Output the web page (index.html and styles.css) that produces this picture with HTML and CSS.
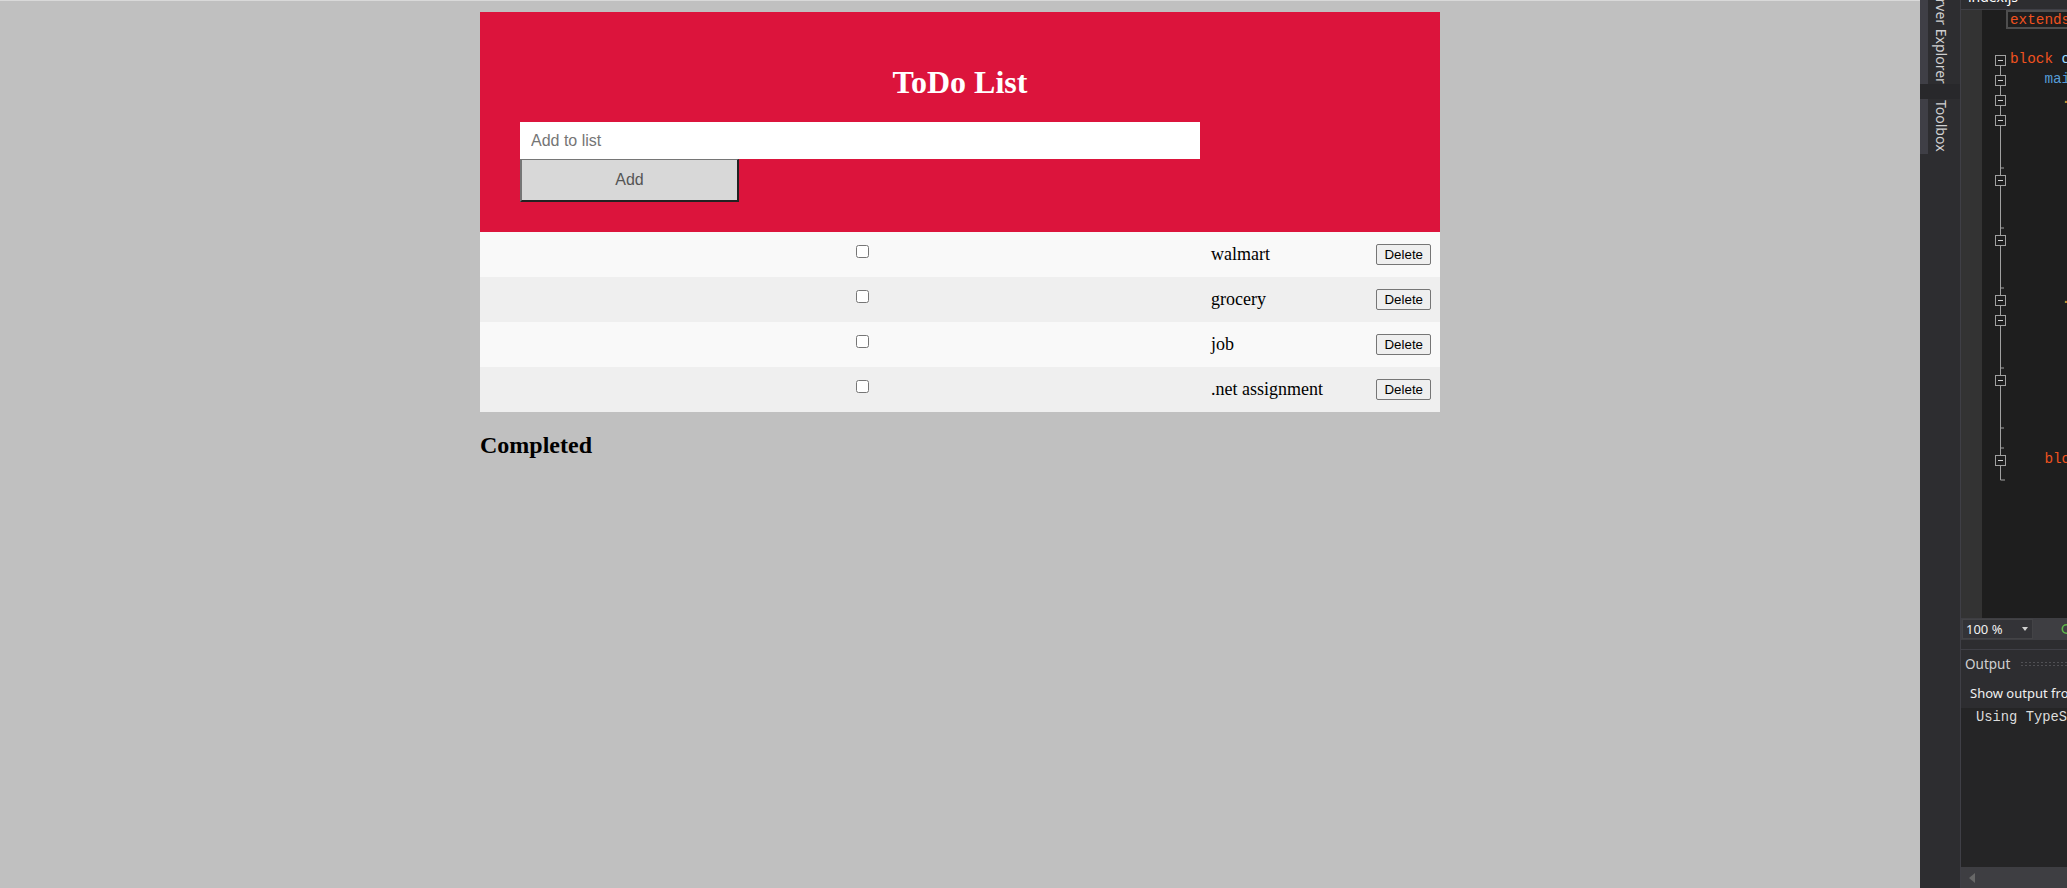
FILE: index.html
```html
<!DOCTYPE html>
<html lang="en">
<head>
<meta charset="utf-8">
<title>ToDo List</title>
<link rel="stylesheet" href="styles.css">
</head>
<body>
<div class="screen">
  <div class="page">
    <div class="wrap">
      <div class="app">
        <header class="head">
          <h1 class="title">ToDo List</h1>
          <form class="add-form">
            <input class="add-input" type="text" placeholder="Add to list">
            <button class="add-btn" type="button">Add</button>
          </form>
        </header>
        <ul class="list">
          <li class="item"><input class="check" type="checkbox"><span class="text">walmart</span><button class="del" type="button">Delete</button></li>
          <li class="item"><input class="check" type="checkbox"><span class="text">grocery</span><button class="del" type="button">Delete</button></li>
          <li class="item"><input class="check" type="checkbox"><span class="text">job</span><button class="del" type="button">Delete</button></li>
          <li class="item"><input class="check" type="checkbox"><span class="text">.net assignment</span><button class="del" type="button">Delete</button></li>
        </ul>
      </div>
      <h2 class="done-title">Completed</h2>
    </div>
  </div>

  <aside class="vs">
    <div class="vs-side">
      <div class="tab tab-server"><span class="tab-label">Server Explorer</span></div>
      <div class="tab-gap"></div>
      <div class="tab tab-toolbox"><span class="tab-label">Toolbox</span></div>
    </div>
    <div class="vs-main">
      <div class="doc-tab"><span>index.js</span></div>
      <div class="editor">
        <div class="ind-margin"></div>
        <div class="code">
          <svg class="outline" width="24" height="608" viewBox="0 0 24 608">
            <g stroke="#a0a0a0" stroke-width="1" fill="none">
              <path d="M18.5 56 V470 H23"/>
              <path d="M18.5 158 H22 M18.5 218 H22 M18.5 278 H22 M18.5 358 H22 M18.5 418 H22 M18.5 438 H22"/>
            </g>
            <g stroke="#a0a0a0" stroke-width="1" fill="#1e1e1e">
              <rect x="13.5" y="45.5" width="10" height="10"/>
              <rect x="13.5" y="65.5" width="10" height="10"/>
              <rect x="13.5" y="85.5" width="10" height="10"/>
              <rect x="13.5" y="105.5" width="10" height="10"/>
              <rect x="13.5" y="165.5" width="10" height="10"/>
              <rect x="13.5" y="225.5" width="10" height="10"/>
              <rect x="13.5" y="285.5" width="10" height="10"/>
              <rect x="13.5" y="305.5" width="10" height="10"/>
              <rect x="13.5" y="365.5" width="10" height="10"/>
              <rect x="13.5" y="445.5" width="10" height="10"/>
            </g>
            <g stroke="#d0d0d0" stroke-width="1">
              <path d="M16 50.5 H21 M16 70.5 H21 M16 90.5 H21 M16 110.5 H21 M16 170.5 H21 M16 230.5 H21 M16 290.5 H21 M16 310.5 H21 M16 370.5 H21 M16 450.5 H21"/>
            </g>
          </svg>
          <div class="lines">
            <div class="ln ln-box"><span class="kw">extends layout</span></div>
            <div class="ln"></div>
            <div class="ln"><span class="kw">block</span> <span class="id">content</span></div>
            <div class="ln">    <span class="tag">main</span></div>
            <div class="ln">      <span class="cls">.todo</span></div>
            <div class="ln"></div>
            <div class="ln"></div>
            <div class="ln"></div>
            <div class="ln"></div>
            <div class="ln"></div>
            <div class="ln"></div>
            <div class="ln"></div>
            <div class="ln"></div>
            <div class="ln"></div>
            <div class="ln">      <span class="cls">.done</span></div>
            <div class="ln"></div>
            <div class="ln"></div>
            <div class="ln"></div>
            <div class="ln"></div>
            <div class="ln"></div>
            <div class="ln"></div>
            <div class="ln"></div>
            <div class="ln">    <span class="kw">block</span></div>
          </div>
        </div>
      </div>
      <div class="hscroll">
        <div class="zoom-box"><span>100 %</span><span class="caret"></span></div>
        <svg class="status-ok" width="6" height="12" viewBox="0 0 6 12"><circle cx="5.5" cy="6" r="4.2" fill="none" stroke="#5fb84a" stroke-width="1.6"/></svg>
      </div>
      <div class="out-gap"></div>
      <div class="output">
        <div class="out-head"><span>Output</span><span class="grip"></span></div>
        <div class="out-toolbar">Show output from:</div>
        <div class="out-body">Using TypeScript</div>
        <div class="out-scroll"><span class="arrow-left"></span></div>
      </div>
    </div>
  </aside>
</div>
</body>
</html>
```
FILE: styles.css
```css
html, body {
  margin: 0;
  padding: 0;
}
body {
  font-family: "Liberation Serif", "Times New Roman", serif;
  background: #c0c0c0;
  overflow: hidden;
}
.screen {
  display: flex;
  width: 2067px;
  height: 888px;
  overflow: hidden;
}
.page {
  width: 1920px;
  flex: none;
  background: #c0c0c0;
  border-top: 1px solid #d9d9d9;
  box-sizing: border-box;
}
.wrap {
  width: 960px;
  margin: 11px auto 0;
}
.head {
  background: #dc143c;
  padding: 30px 40px;
}
.title {
  margin: 21.5px 0 21.8px;
  font-size: 32px;
  font-weight: bold;
  color: #ffffff;
  text-align: center;
  line-height: normal;
}
.add-form {
  display: flex;
  flex-direction: column;
  align-items: flex-start;
  margin: 0;
}
.add-input {
  width: 680px;
  height: 37px;
  box-sizing: border-box;
  border: none;
  outline: none;
  margin: 0;
  padding: 0 11px;
  font: 16px "Liberation Sans", Arial, sans-serif;
  background: #ffffff;
  color: #333;
}
.add-input::placeholder {
  color: #757575;
}
.add-btn {
  width: 219px;
  height: 43px;
  box-sizing: border-box;
  margin: 0;
  padding: 0;
  background: #d8d8d8;
  border-style: solid;
  border-width: 1px 2px 2px 2px;
  border-color: #767676 #222222 #222222 #767676;
  border-radius: 0;
  font: 16px "Liberation Sans", Arial, sans-serif;
  color: #555555;
}
.list {
  list-style: none;
  margin: 0;
  padding: 0;
}
.item {
  display: flex;
  align-items: center;
  height: 45px;
  background: #f9f9f9;
}
.item:nth-child(even) {
  background: #efefef;
}
.check {
  width: 13px;
  height: 13px;
  margin: 0 0 7px 376px;
  flex: none;
}
.text {
  flex: 1;
  margin-left: 342px;
  font-size: 18px;
  color: #000;
}
.del {
  flex: none;
  height: 21px;
  box-sizing: border-box;
  margin: 0 9px 0 0;
  padding: 0 7px;
  border: 1px solid #767676;
  border-radius: 2px;
  background: #efefef;
  font: 13.333px "Liberation Sans", Arial, sans-serif;
  color: #000;
}
.done-title {
  margin: 19.92px 0;
  font-size: 24px;
  font-weight: bold;
  color: #000;
}

/* ---------- Visual Studio side panel ---------- */
.vs {
  width: 147px;
  flex: none;
  display: flex;
  background: #2d2d30;
  font-family: "Noto Sans", "Open Sans", sans-serif;
}
.vs-side {
  width: 40px;
  flex: none;
  display: flex;
  flex-direction: column;
}
.tab {
  box-sizing: border-box;
  display: flex;
  flex-direction: column;
  align-items: flex-end;
  border-left: 8px solid #3f3f46;
  padding-right: 9px;
  overflow: hidden;
}
.tab-label {
  flex: none;
  writing-mode: vertical-rl;
  color: #d0d0d0;
  font-size: 14px;
  line-height: 20px;
  white-space: nowrap;
}
.tab-server {
  height: 84px;
  justify-content: flex-end;
}
.tab-gap {
  height: 15px;
  background: #28282b;
}
.tab-toolbox {
  height: 55px;
  justify-content: flex-start;
  padding-top: 1px;
}
.vs-main {
  flex: 1;
  display: flex;
  flex-direction: column;
  border-left: 1px solid #3f3f46;
  min-width: 0;
}
.doc-tab {
  height: 9px;
  overflow: hidden;
  padding-left: 7px;
  color: #ffffff;
  font-size: 14px;
  line-height: 14px;
  white-space: nowrap;
}
.doc-tab span {
  display: block;
  margin-top: -10px;
}
.editor {
  height: 608px;
  display: flex;
  border-top: 1px solid #3f3f46;
}
.ind-margin {
  width: 21px;
  flex: none;
  background: #333333;
}
.code {
  flex: 1;
  display: flex;
  background: #1e1e1e;
  overflow: hidden;
  min-width: 0;
}
.outline {
  flex: none;
  display: block;
}
.lines {
  flex: 1;
  padding-left: 4px;
  font-family: "Liberation Mono", "DejaVu Sans Mono", monospace;
  font-size: 14.33px;
  line-height: 20px;
  color: #dcdcdc;
  overflow: hidden;
  min-width: 0;
}
.ln {
  height: 20px;
  white-space: pre;
}
.ln-box {
  height: 19px;
  box-sizing: border-box;
  margin-left: -4px;
  padding-left: 2px;
  border: 2px solid #4e4e4e;
  border-right: none;
  line-height: 16px;
}
.kw { color: #f0521f; }
.id { color: #9cdcfe; }
.tag { color: #569cd6; }
.cls { color: #d7a13c; }
.hscroll {
  height: 22px;
  display: flex;
  align-items: center;
  background: #3e3e42;
}
.zoom-box {
  width: 73px;
  height: 20px;
  box-sizing: border-box;
  margin-left: 1px;
  display: flex;
  align-items: center;
  justify-content: space-between;
  padding: 0 4px 0 3px;
  background: #333337;
  border: 1px solid #434346;
  color: #f1f1f1;
  font-size: 13px;
}
.caret {
  width: 0;
  height: 0;
  border-left: 3.5px solid transparent;
  border-right: 3.5px solid transparent;
  border-top: 4px solid #d0d0d0;
}
.status-ok {
  margin-left: 28px;
  flex: none;
}
.out-gap {
  height: 9px;
}
.output {
  flex: 1;
  display: flex;
  flex-direction: column;
  border-top: 1px solid #3f3f46;
  min-height: 0;
}
.out-head {
  height: 28px;
  display: flex;
  align-items: center;
  padding-left: 4px;
  color: #d0d0d0;
  font-size: 13.5px;
  white-space: nowrap;
}
.grip {
  flex: 1;
  height: 6px;
  margin-left: 10px;
  background-image: radial-gradient(circle, #505054 0.8px, transparent 1.1px);
  background-size: 4px 3px;
}
.out-toolbar {
  height: 30px;
  display: flex;
  align-items: center;
  padding-left: 9px;
  color: #f1f1f1;
  font-size: 13px;
  white-space: nowrap;
}
.out-body {
  flex: 1;
  background: #252526;
  padding: 1px 0 0 15px;
  font-family: "Liberation Mono", "DejaVu Sans Mono", monospace;
  font-size: 13.8px;
  line-height: 18px;
  color: #dcdcdc;
  white-space: pre;
  overflow: hidden;
}
.out-scroll {
  height: 21px;
  flex: none;
  display: flex;
  align-items: center;
  padding-left: 8px;
  background: #3e3e42;
}
.arrow-left {
  width: 0;
  height: 0;
  border-top: 5px solid transparent;
  border-bottom: 5px solid transparent;
  border-right: 6px solid #686868;
}
```
